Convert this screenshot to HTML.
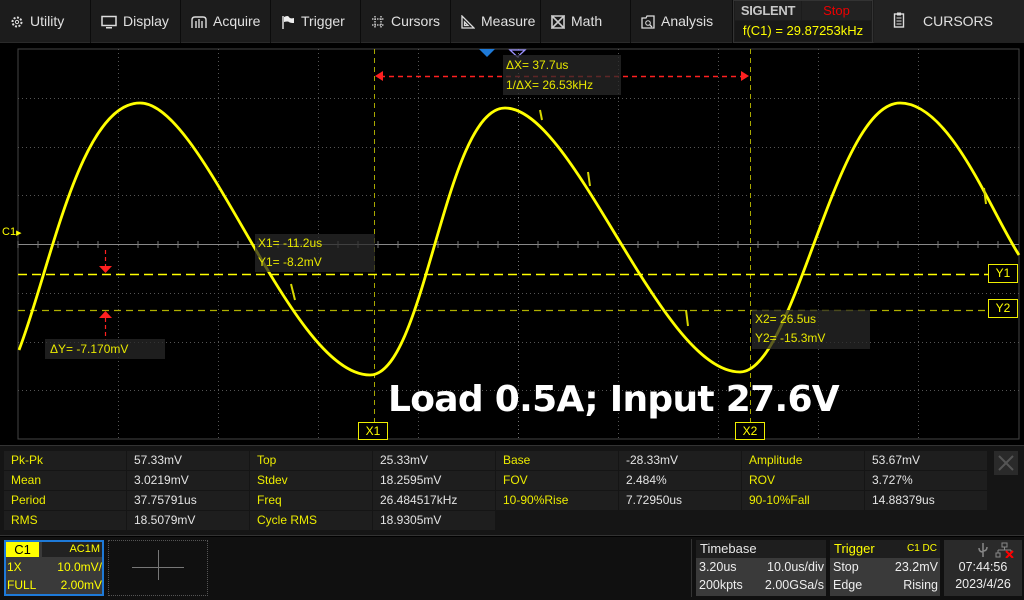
<!DOCTYPE html>
<html><head><meta charset="utf-8"><style>
*{margin:0;padding:0;box-sizing:border-box}
body{width:1024px;height:600px;background:#000;overflow:hidden;position:relative;font-family:"Liberation Sans",sans-serif;}
.top{position:absolute;left:0;top:0;width:1024px;height:43px;background:#1c1c1c;border-bottom:1px solid #2a2a2a}
.mi{position:absolute;top:0;height:43px;line-height:43px;color:#e0e0e0;font-size:14px;border-right:1px solid #0c0c0c;padding-left:10px}
.mi svg{vertical-align:-3px;margin-right:6px}
.abs{position:absolute}
.y{color:#ffff00}
.lab{position:absolute;background:rgba(40,40,40,0.75);color:#e8e800;font-size:12px;line-height:20px;padding-left:3px}
.tbl{position:absolute;left:0;top:445px;width:1024px;height:91px;background:#151515;border-top:1px solid #333;border-bottom:1px solid #333}
.c{position:absolute;height:19px;line-height:19px;font-size:12px;background:#1e1e1e;padding-left:7px;color:#e4e4e4}
.c.l{color:#ecec00}
.bot{position:absolute;left:0;top:537px;width:1024px;height:63px;background:#101010}
</style></head><body>
<div class="top">
 <div class="mi" style="left:0;width:91px"><svg width="14" height="14" viewBox="0 0 14 14"><circle cx="7" cy="7" r="4.5" fill="none" stroke="#ddd" stroke-width="2" stroke-dasharray="2 1.5"/><circle cx="7" cy="7" r="1.6" fill="none" stroke="#ddd"/></svg>Utility</div>
 <div class="mi" style="left:91px;width:90px"><svg width="16" height="14" viewBox="0 0 16 14"><rect x="1" y="1.5" width="14" height="9" fill="none" stroke="#ddd" stroke-width="1.5"/><rect x="5" y="12" width="6" height="1.5" fill="#ddd"/></svg>Display</div>
 <div class="mi" style="left:181px;width:90px"><svg width="16" height="14" viewBox="0 0 16 14"><path d="M1 13V5Q1 2 4 2H12Q15 2 15 5V13M5 13V6M11 13V6M8 13V4" fill="none" stroke="#ddd" stroke-width="1.4"/></svg>Acquire</div>
 <div class="mi" style="left:271px;width:90px"><svg width="14" height="14" viewBox="0 0 14 14"><path d="M2 1V14" stroke="#ddd" stroke-width="1.5"/><path d="M3 2Q7 0 8 2T13 3V8Q9 8 8 7T3 7Z" fill="#eee"/></svg>Trigger</div>
 <div class="mi" style="left:361px;width:90px"><svg width="14" height="14" viewBox="0 0 14 14"><path d="M4 1V13M10 1V13M1 4H13M1 10H13" stroke="#ddd" stroke-width="1.3" stroke-dasharray="1.5 1"/></svg>Cursors</div>
 <div class="mi" style="left:451px;width:90px"><svg width="14" height="14" viewBox="0 0 14 14"><path d="M1 1V13H13ZM3.5 7V10.5H7Z" fill="none" stroke="#ddd" stroke-width="1.3"/></svg>Measure</div>
 <div class="mi" style="left:541px;width:90px"><svg width="14" height="14" viewBox="0 0 14 14"><path d="M1 1H13L7 7ZM1 13H13L7 7ZM1 1V13M13 1V13" fill="none" stroke="#ccc" stroke-width="1.6"/></svg>Math</div>
 <div class="mi" style="left:631px;width:102px"><svg width="14" height="14" viewBox="0 0 14 14"><path d="M1 3H5L6 1H13V13H1Z" fill="none" stroke="#ddd" stroke-width="1.3"/><circle cx="7" cy="8" r="2.3" fill="none" stroke="#ddd"/><path d="M8.6 9.6L11 12" stroke="#ddd" stroke-width="1.3"/></svg>Analysis</div>
 <div class="abs" style="left:733px;top:0;width:140px;height:43px;background:#1c1c1c;border:1px solid #333"></div>
 <div class="abs" style="left:735px;top:1px;width:66px;height:19px;background:#222;color:#c8c8c8;font-weight:bold;font-size:13px;line-height:19px;text-align:center;letter-spacing:-0.3px;overflow:hidden">SIGLENT</div>
 <div class="abs" style="left:802px;top:1px;width:69px;height:19px;background:#222;color:#e00;font-size:13px;line-height:19px;text-align:center">Stop</div>
 <div class="abs y" style="left:735px;top:21px;width:136px;height:20px;background:#181818;font-size:13px;line-height:20px;text-align:center">f(C1) = 29.87253kHz</div>
 <div class="abs" style="left:874px;top:0;width:150px;height:43px;background:#222"></div>
 <div class="abs" style="left:893px;top:12px;"><svg width="12" height="17" viewBox="0 0 12 17"><rect x="1.5" y="2" width="9" height="13" fill="none" stroke="#ddd" stroke-width="1.4"/><rect x="4" y="0.5" width="4" height="3" fill="#ddd"/><path d="M3.5 6H8.5M3.5 9H8.5M3.5 12H8.5" stroke="#ddd"/></svg></div>
 <div class="abs" style="left:923px;top:0;line-height:43px;color:#e0e0e0;font-size:14px">CURSORS</div>
</div>

<svg class="abs" style="left:0;top:44px" width="1024" height="401" viewBox="0 44 1024 401">
 <rect x="18" y="49" width="1001" height="390" fill="none" stroke="#444" stroke-width="1"/>
 <g stroke="#555" stroke-width="1" stroke-dasharray="1 3">
  <path d="M118.5 49V439M218.5 49V439M318.5 49V439M418.5 49V439M618.5 49V439M718.5 49V439M818.5 49V439M918.5 49V439"/>
  <path d="M18 98.5H1019M18 147.5H1019M18 195.5H1019M18 293.5H1019M18 342.5H1019M18 390.5H1019"/>
 </g>
 <path d="M518.5 49V439" stroke="#777" stroke-dasharray="1 3"/>
 <path d="M18 244.5H1019" stroke="#888"/>
 <path d="M18 241V248M38 241V248M58 241V248M78 241V248M98 241V248M138 241V248M158 241V248M178 241V248M198 241V248M238 241V248M258 241V248M278 241V248M298 241V248M338 241V248M358 241V248M378 241V248M398 241V248M438 241V248M458 241V248M478 241V248M498 241V248M538 241V248M558 241V248M578 241V248M598 241V248M638 241V248M658 241V248M678 241V248M698 241V248M738 241V248M758 241V248M778 241V248M798 241V248M838 241V248M858 241V248M878 241V248M898 241V248M938 241V248M958 241V248M978 241V248M998 241V248" stroke="#777"/>
 <path d="M374.5 49V422M750.5 49V422" stroke="#a8a800" stroke-dasharray="5 4"/>
 <path d="M18 274.5H988" stroke="#ffff00" stroke-width="1.5" stroke-dasharray="9 5"/>
 <path d="M18 310.5H988" stroke="#b0b000" stroke-width="1.2" stroke-dasharray="7 5"/>
 <path d="M380 76.5H744" stroke="#ff2020" stroke-width="1.5" stroke-dasharray="5 4"/>
 <path d="M375 76L383 71V81ZM749 76L741 71V81Z" fill="#ff2020"/>
 <path d="M105.5 250V268M105.5 318V340" stroke="#ff2020" stroke-width="1.2" stroke-dasharray="4 3"/>
 <path d="M99 266H112L105.5 273ZM99 318H112L105.5 311Z" fill="#ff2020"/>
 <path d="M479 49H495L487 57Z" fill="#1e7ad8"/>
 <path d="M510 50H525L517.5 57Z" fill="none" stroke="#9a90ff" stroke-width="1.3"/>
 <path d="M19 350 C 50 270 80 103 140 103 C 205 103 290 375 370 375 C 425 375 445 108 505 108 C 575 108 660 372 740 372 C 795 372 835 103 900 103 C 950 103 990 210 1019 255" fill="none" stroke="#ffff00" stroke-width="2.8"/>
 <path d="M291 284L295 300M686 310L688 326M588 172L590 186M984 188L986 204M540 110L542 120" stroke="#d8d800" stroke-width="2"/>
</svg>

<div class="lab" style="left:503px;top:55px;width:118px;height:40px">ΔX= 37.7us<br>1/ΔX= 26.53kHz</div>
<div class="lab" style="left:255px;top:234px;width:120px;height:38px;line-height:19px">X1= -11.2us<br>Y1= -8.2mV</div>
<div class="lab" style="left:752px;top:310px;width:118px;height:39px;line-height:19px">X2= 26.5us<br>Y2= -15.3mV</div>
<div class="lab" style="left:45px;top:339px;width:120px;height:20px;padding-left:5px">ΔY= -7.170mV</div>
<div class="abs y" style="left:2px;top:226px;font-size:11px">C1<span style="font-size:7px">▶</span></div>
<div class="abs y" style="left:988px;top:264px;width:30px;height:19px;border:1px solid #ee0;font-size:12px;line-height:17px;text-align:center">Y1</div>
<div class="abs y" style="left:988px;top:299px;width:30px;height:19px;border:1px solid #ee0;font-size:12px;line-height:17px;text-align:center">Y2</div>
<div class="abs y" style="left:358px;top:422px;width:30px;height:18px;border:1px solid #ee0;font-size:12px;line-height:16px;text-align:center;background:#000">X1</div>
<div class="abs y" style="left:735px;top:422px;width:30px;height:18px;border:1px solid #ee0;font-size:12px;line-height:16px;text-align:center;background:#000">X2</div>
<div class="abs" style="left:388px;top:379px;color:#fff;font-weight:bold;font-size:36px;font-family:'DejaVu Sans',sans-serif;letter-spacing:-0.7px;white-space:nowrap">Load 0.5A; Input 27.6V</div>

<div class="tbl">
 <div class="c l" style="left:4px;top:5px;width:122px">Pk-Pk</div><div class="c" style="left:127px;top:5px;width:122px">57.33mV</div>
 <div class="c l" style="left:250px;top:5px;width:122px">Top</div><div class="c" style="left:373px;top:5px;width:122px">25.33mV</div>
 <div class="c l" style="left:496px;top:5px;width:122px">Base</div><div class="c" style="left:619px;top:5px;width:122px">-28.33mV</div>
 <div class="c l" style="left:742px;top:5px;width:122px">Amplitude</div><div class="c" style="left:865px;top:5px;width:122px">53.67mV</div>
 <div class="c l" style="left:4px;top:25px;width:122px">Mean</div><div class="c" style="left:127px;top:25px;width:122px">3.0219mV</div>
 <div class="c l" style="left:250px;top:25px;width:122px">Stdev</div><div class="c" style="left:373px;top:25px;width:122px">18.2595mV</div>
 <div class="c l" style="left:496px;top:25px;width:122px">FOV</div><div class="c" style="left:619px;top:25px;width:122px">2.484%</div>
 <div class="c l" style="left:742px;top:25px;width:122px">ROV</div><div class="c" style="left:865px;top:25px;width:122px">3.727%</div>
 <div class="c l" style="left:4px;top:45px;width:122px">Period</div><div class="c" style="left:127px;top:45px;width:122px">37.75791us</div>
 <div class="c l" style="left:250px;top:45px;width:122px">Freq</div><div class="c" style="left:373px;top:45px;width:122px">26.484517kHz</div>
 <div class="c l" style="left:496px;top:45px;width:122px">10-90%Rise</div><div class="c" style="left:619px;top:45px;width:122px">7.72950us</div>
 <div class="c l" style="left:742px;top:45px;width:122px">90-10%Fall</div><div class="c" style="left:865px;top:45px;width:122px">14.88379us</div>
 <div class="c l" style="left:4px;top:65px;width:122px">RMS</div><div class="c" style="left:127px;top:65px;width:122px">18.5079mV</div>
 <div class="c l" style="left:250px;top:65px;width:122px">Cycle RMS</div><div class="c" style="left:373px;top:65px;width:122px">18.9305mV</div>
 <div class="abs" style="left:994px;top:5px;width:24px;height:24px;background:#2a2a2a"><svg width="24" height="24"><path d="M5 5L19 19M19 5L5 19" stroke="#555" stroke-width="2"/></svg></div>
</div>

<div class="bot">
 <div class="abs" style="left:4px;top:3px;width:100px;height:56px;border:2px solid #1e7ad8;background:#3a3a3a"></div>
 <div class="abs" style="left:6px;top:5px;width:33px;height:15px;background:#ffff00;color:#000;font-size:13px;line-height:15px;text-align:center">C1</div>
 <div class="abs y" style="left:42px;top:5px;width:60px;height:15px;background:#222;font-size:11px;line-height:15px;text-align:right;padding-right:2px">AC1M</div>
 <div class="abs y" style="left:7px;top:21px;width:95px;font-size:12px;line-height:18px">1X<span style="float:right">10.0mV/</span><br>FULL<span style="float:right">2.00mV</span></div>
 <div class="abs" style="left:108px;top:3px;width:100px;height:56px;border:1px dotted #555"></div>
 <div class="abs" style="left:132px;top:30px;width:52px;height:1px;background:#777"></div>
 <div class="abs" style="left:158px;top:13px;width:1px;height:30px;background:#777"></div>
 <div class="abs" style="left:691px;top:2px;width:1px;height:58px;background:#333"></div>
 <div class="abs" style="left:696px;top:3px;width:130px;height:56px;background:#3a3a3a"></div>
 <div class="abs" style="left:696px;top:3px;width:130px;height:18px;background:#1e1e1e;color:#e8e8e8;font-size:13px;line-height:18px;padding-left:4px">Timebase</div>
 <div class="abs" style="left:699px;top:21px;width:125px;color:#eee;font-size:12.5px;line-height:18px">3.20us<span style="float:right">10.0us/div</span><br>200kpts<span style="float:right">2.00GSa/s</span></div>
 <div class="abs" style="left:830px;top:3px;width:110px;height:56px;background:#3a3a3a"></div>
 <div class="abs y" style="left:830px;top:3px;width:110px;height:18px;background:#1e1e1e;font-size:13px;line-height:18px;padding-left:4px">Trigger<span style="float:right;font-size:10px;margin-right:3px">C1 DC</span></div>
 <div class="abs" style="left:833px;top:21px;width:105px;color:#eee;font-size:12.5px;line-height:18px">Stop<span style="float:right">23.2mV</span><br>Edge<span style="float:right">Rising</span></div>
 <div class="abs" style="left:944px;top:3px;width:78px;height:56px;background:#2a2a2a"></div>
 <div class="abs" style="left:978px;top:5px"><svg width="40" height="16"><path d="M5 1V15M1 6Q1 10 5 10M9 5Q9 9 5 9" stroke="#888" fill="none" stroke-width="1.5"/><rect x="24" y="1" width="5" height="4" fill="none" stroke="#888"/><path d="M26.5 5V8M20 8H33M20 8V11M33 8V11" stroke="#888" fill="none"/><rect x="18" y="11" width="4" height="4" fill="none" stroke="#888"/><path d="M28 9L35 16M35 9L28 16" stroke="#f00" stroke-width="2"/></svg></div>
 <div class="abs" style="left:944px;top:22px;width:78px;color:#eee;font-size:12.5px;line-height:17px;text-align:center">07:44:56<br>2023/4/26</div>
</div>
</body></html>
